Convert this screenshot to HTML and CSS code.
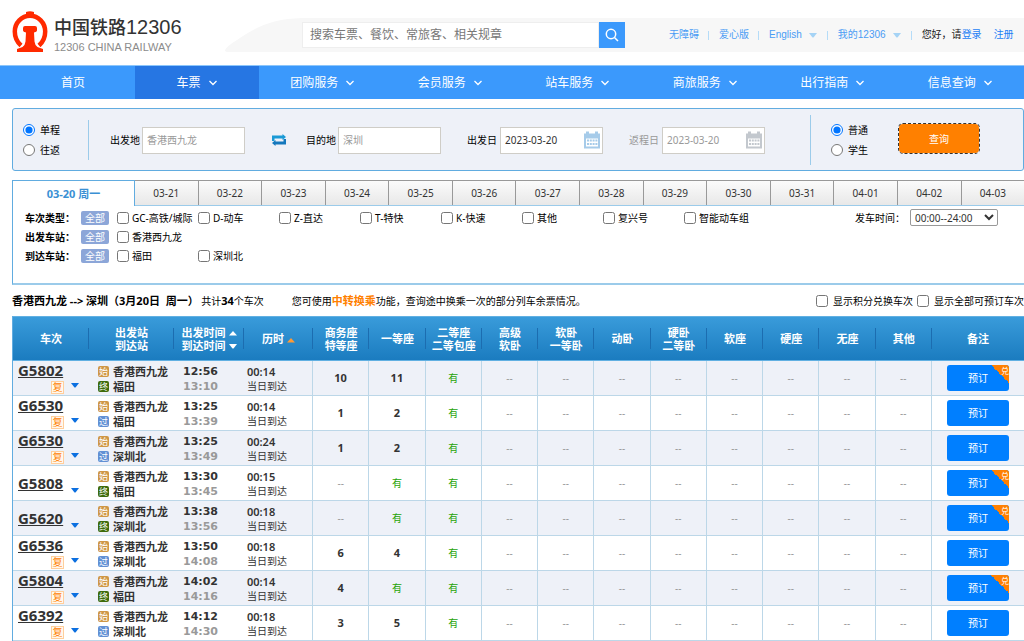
FILE: index.html
```html
<!DOCTYPE html>
<html lang="zh-CN">
<head>
<meta charset="utf-8">
<title>中国铁路12306</title>
<link rel="stylesheet" href="styles.css">
</head>
<body>
<svg class="defs" aria-hidden="true">
  <symbol id="chev" viewBox="0 0 10 6"><path d="M1.500 1l3.500 3.500L8.500 1" fill="none" stroke="currentColor" stroke-width="1.300"/></symbol>
  <symbol id="down" viewBox="0 0 8 5"><path d="M0 0h8L4.500 4.500h-1z" fill="currentColor"/></symbol>
  <symbol id="up" viewBox="0 0 8 5"><path d="M0 4.500h8L4 0z" fill="currentColor"/></symbol>
  <symbol id="cal" viewBox="0 0 18 18">
    <path d="M1 2.500h2V.5h3v2h6v-2h3v2h2v15H1z" fill="currentColor"/>
    <path d="M3 7.500h12v8H3z" fill="#fff"/>
    <path d="M4 8.500h2v2H4zm2.800 0h2v2h-2zm2.800 0h2v2h-2zm2.800 0h2v2h-2zM4 12h2v2H4zm2.800 0h2v2h-2zm2.800 0h2v2h-2zm2.800 0h2v2h-2z" fill="currentColor"/>
  </symbol>
</svg>
<header class="top">
  <a class="brand" href="#">
    <svg class="mark" viewBox="0 0 36 42" aria-hidden="true">
      <path d="M9 34.500C5 31 2.800 27 2.800 20.500a15.200 15.800 0 0 1 30.400 0C33.200 27 31 31 27 34.500" fill="none" stroke="#ff2a00" stroke-width="4.500"/>
      <path d="M14 1q4-1.500 8 0v4h-8zM11 17q0-2 2-2h10q2 0 2 2v2.500q0 1.500-3 2l.5 9q.5 4 3 5.500l5.500 2V41H5v-3l5.500-2q2.500-1.500 3-5.500l.5-9q-3-.5-3-2z" fill="#ff2a00"/>
    </svg>
    <span class="brand-text"><span class="brand-name">中国铁路<span class="brand-num">12306</span></span><span class="brand-sub">12306 CHINA RAILWAY</span></span>
  </a>
  <div class="band">
    <svg class="swoosh" viewBox="0 0 77 34" aria-hidden="true"><path d="M0 32Q2 28 12 22C32 8 48 1 77 0v34H3Q0 34 0 32z" fill="#f7f7f7"/></svg>
    <div class="band-body">
      <form class="search">
        <input type="text" aria-label="搜索" placeholder="搜索车票、餐饮、常旅客、相关规章">
        <button type="button" aria-label="搜索"><svg viewBox="0 0 14 14"><circle cx="6" cy="6" r="4.700" fill="none" stroke="#fff" stroke-width="1.500"/><path d="M9.500 9.500l3.500 3.500" stroke="#fff" stroke-width="1.500"/></svg></button>
      </form>
      <div class="links">
        <a href="#">无障碍</a><i></i><a href="#">爱心版</a><i></i>
        <a href="#">English <svg><use href="#down"/></svg></a><i></i>
        <a href="#">我的12306 <svg><use href="#down"/></svg></a><i></i>
        <span class="hello">您好，请<a href="#">登录</a></span><a class="reg" href="#">注册</a>
      </div>
    </div>
  </div>
</header>
<nav class="nav">
  <a class="home" href="#">首页</a>
  <a class="on" href="#">车票<svg><use href="#chev"/></svg></a>
  <a href="#">团购服务<svg><use href="#chev"/></svg></a>
  <a href="#">会员服务<svg><use href="#chev"/></svg></a>
  <a href="#">站车服务<svg><use href="#chev"/></svg></a>
  <a href="#">商旅服务<svg><use href="#chev"/></svg></a>
  <a href="#">出行指南<svg><use href="#chev"/></svg></a>
  <a href="#">信息查询<svg><use href="#chev"/></svg></a>
</nav>
<main>
  <form class="query">
    <div class="radios trip">
      <label><input type="radio" name="trip" checked>单程</label>
      <label><input type="radio" name="trip">往返</label>
    </div>
    <div class="field from"><label for="from">出发地</label><span class="box"><input id="from" type="text" placeholder="香港西九龙"></span></div>
    <button type="button" class="swap" aria-label="换"><svg viewBox="0 0 14 12"><path d="M0 7V1.500h10.500V0L14 3l-3.500 3V4.500H2.500V7z" fill="#1a9ad6"/><path d="M14 5v5.500H3.500V12L0 9l3.500-3v1.500h8V5z" fill="#1478bd"/></svg></button>
    <div class="field to"><label for="to">目的地</label><span class="box"><input id="to" type="text" placeholder="深圳"></span></div>
    <div class="field go"><label for="go">出发日</label><span class="box"><input id="go" type="text" value="2023-03-20"><svg><use href="#cal"/></svg></span></div>
    <div class="field back"><label for="back">返程日</label><span class="box"><input id="back" type="text" value="2023-03-20"><svg><use href="#cal"/></svg></span></div>
    <div class="radios kind">
      <label><input type="radio" name="kind" checked>普通</label>
      <label><input type="radio" name="kind">学生</label>
    </div>
    <button type="button" class="submit">查询</button>
  </form>

  <div class="days">
    <a class="on" href="#">03-20 周一</a><a href="#">03-21</a><a href="#">03-22</a><a href="#">03-23</a><a href="#">03-24</a><a href="#">03-25</a><a href="#">03-26</a><a href="#">03-27</a><a href="#">03-28</a><a href="#">03-29</a><a href="#">03-30</a><a href="#">03-31</a><a href="#">04-01</a><a href="#">04-02</a><a href="#">04-03</a>
  </div>
  <section class="filters">
    <div class="frow">
      <b>车次类型：</b><button type="button">全部</button>
      <div class="opts">
        <label><input type="checkbox">GC-高铁/城际</label><label><input type="checkbox">D-动车</label><label><input type="checkbox">Z-直达</label><label><input type="checkbox">T-特快</label><label><input type="checkbox">K-快速</label><label><input type="checkbox">其他</label><label><input type="checkbox">复兴号</label><label><input type="checkbox">智能动车组</label>
      </div>
      <div class="depart"><label for="time">发车时间：</label><select id="time"><option>00:00--24:00</option></select></div>
    </div>
    <div class="frow"><b>出发车站：</b><button type="button">全部</button><div class="opts"><label><input type="checkbox">香港西九龙</label></div></div>
    <div class="frow"><b>到达车站：</b><button type="button">全部</button><div class="opts"><label><input type="checkbox">福田</label><label><input type="checkbox">深圳北</label></div></div>
  </section>

  <div class="summary">
    <p><strong>香港西九龙 --&gt; 深圳（3月20日&nbsp; 周一）</strong>&nbsp;共计<strong>34</strong>个车次</p>
    <p class="tip">您可使用<a href="#">中转换乘</a>功能，查询途中换乘一次的部分列车余票情况。</p>
    <div class="toggles"><label><input type="checkbox">显示积分兑换车次</label><label><input type="checkbox">显示全部可预订车次</label></div>
  </div>

  <table class="trains">
    <colgroup><col class="c-no"><col class="c-st"><col class="c-tm"><col class="c-du"><col span="11"><col class="c-op"></colgroup>
    <thead><tr>
      <th>车次</th><th>出发站<br>到达站</th><th class="time-h">出发时间<svg><use href="#up"/></svg><br>到达时间<svg><use href="#down"/></svg></th><th>历时<svg class="hot"><use href="#up"/></svg></th><th>商务座<br>特等座</th><th>一等座</th><th>二等座<br>二等包座</th><th>高级<br>软卧</th><th>软卧<br>一等卧</th><th>动卧</th><th>硬卧<br>二等卧</th><th>软座</th><th>硬座</th><th>无座</th><th>其他</th><th>备注</th>
    </tr></thead>
    <tbody>
      <tr><td class="no"><a href="#">G5802</a><span class="sub"><em>复</em><svg><use href="#down"/></svg></span></td><td class="st"><div><i class="s">始</i>香港西九龙</div><div><i class="e">终</i>福田</div></td><td class="tm"><div>12:56</div><div>13:10</div></td><td class="du"><div>00:14</div><div>当日到达</div></td><td class="n">10</td><td class="n">11</td><td class="y">有</td><td>--</td><td>--</td><td>--</td><td>--</td><td>--</td><td>--</td><td>--</td><td>--</td><td><button type="button" class="book">预订<span>兑</span></button></td></tr>
      <tr><td class="no"><a href="#">G6530</a><span class="sub"><em>复</em><svg><use href="#down"/></svg></span></td><td class="st"><div><i class="s">始</i>香港西九龙</div><div><i class="p">过</i>福田</div></td><td class="tm"><div>13:25</div><div>13:39</div></td><td class="du"><div>00:14</div><div>当日到达</div></td><td class="n">1</td><td class="n">2</td><td class="y">有</td><td>--</td><td>--</td><td>--</td><td>--</td><td>--</td><td>--</td><td>--</td><td>--</td><td><button type="button" class="book">预订</button></td></tr>
      <tr><td class="no"><a href="#">G6530</a><span class="sub"><em>复</em><svg><use href="#down"/></svg></span></td><td class="st"><div><i class="s">始</i>香港西九龙</div><div><i class="p">过</i>深圳北</div></td><td class="tm"><div>13:25</div><div>13:49</div></td><td class="du"><div>00:24</div><div>当日到达</div></td><td class="n">1</td><td class="n">2</td><td class="y">有</td><td>--</td><td>--</td><td>--</td><td>--</td><td>--</td><td>--</td><td>--</td><td>--</td><td><button type="button" class="book">预订</button></td></tr>
      <tr><td class="no plain"><a href="#">G5808</a><span class="sub"><svg><use href="#down"/></svg></span></td><td class="st"><div><i class="s">始</i>香港西九龙</div><div><i class="e">终</i>福田</div></td><td class="tm"><div>13:30</div><div>13:45</div></td><td class="du"><div>00:15</div><div>当日到达</div></td><td>--</td><td class="y">有</td><td class="y">有</td><td>--</td><td>--</td><td>--</td><td>--</td><td>--</td><td>--</td><td>--</td><td>--</td><td><button type="button" class="book">预订<span>兑</span></button></td></tr>
      <tr><td class="no plain"><a href="#">G5620</a><span class="sub"><svg><use href="#down"/></svg></span></td><td class="st"><div><i class="s">始</i>香港西九龙</div><div><i class="e">终</i>深圳北</div></td><td class="tm"><div>13:38</div><div>13:56</div></td><td class="du"><div>00:18</div><div>当日到达</div></td><td>--</td><td class="y">有</td><td class="y">有</td><td>--</td><td>--</td><td>--</td><td>--</td><td>--</td><td>--</td><td>--</td><td>--</td><td><button type="button" class="book">预订<span>兑</span></button></td></tr>
      <tr><td class="no"><a href="#">G6536</a><span class="sub"><em>复</em><svg><use href="#down"/></svg></span></td><td class="st"><div><i class="s">始</i>香港西九龙</div><div><i class="p">过</i>深圳北</div></td><td class="tm"><div>13:50</div><div>14:08</div></td><td class="du"><div>00:18</div><div>当日到达</div></td><td class="n">6</td><td class="n">4</td><td class="y">有</td><td>--</td><td>--</td><td>--</td><td>--</td><td>--</td><td>--</td><td>--</td><td>--</td><td><button type="button" class="book">预订</button></td></tr>
      <tr><td class="no"><a href="#">G5804</a><span class="sub"><em>复</em><svg><use href="#down"/></svg></span></td><td class="st"><div><i class="s">始</i>香港西九龙</div><div><i class="e">终</i>福田</div></td><td class="tm"><div>14:02</div><div>14:16</div></td><td class="du"><div>00:14</div><div>当日到达</div></td><td class="n">4</td><td class="y">有</td><td class="y">有</td><td>--</td><td>--</td><td>--</td><td>--</td><td>--</td><td>--</td><td>--</td><td>--</td><td><button type="button" class="book">预订<span>兑</span></button></td></tr>
      <tr><td class="no"><a href="#">G6392</a><span class="sub"><em>复</em><svg><use href="#down"/></svg></span></td><td class="st"><div><i class="s">始</i>香港西九龙</div><div><i class="p">过</i>深圳北</div></td><td class="tm"><div>14:12</div><div>14:30</div></td><td class="du"><div>00:18</div><div>当日到达</div></td><td class="n">3</td><td class="n">5</td><td class="y">有</td><td>--</td><td>--</td><td>--</td><td>--</td><td>--</td><td>--</td><td>--</td><td>--</td><td><button type="button" class="book">预订</button></td></tr>
    </tbody>
  </table>
</main>
</body>
</html>
```
FILE: styles.css
```css
* { box-sizing: border-box; }
body {
  margin: 0;
  background: #fff;
  color: #000;
  font: 10px/16px "Noto Sans", "Noto Sans CJK SC", sans-serif;
}
a { color: inherit; text-decoration: none; }
button, input, select { font: inherit; margin: 0; }
button { border: 0; padding: 0; }
p { margin: 0; }
svg { display: block; flex: none; }
.defs { position: absolute; width: 0; height: 0; }
input[type="radio"], input[type="checkbox"] { width: 12px; height: 12px; flex: none; }
label { white-space: nowrap; }

/* header */
.top { display: flex; height: 65px; padding: 11px 0 0 12px; }
.brand { display: flex; width: 213px; flex: none; }
.mark { width: 36px; height: 42px; }
.brand-text { padding: 3px 0 0 6px; white-space: nowrap; font-family: "Liberation Sans", "Noto Sans CJK SC", sans-serif; }
.brand-name { display: block; font-size: 18px; line-height: 26px; font-weight: 500; color: #333; }
.brand-num { font-size: 20px; font-weight: 400; }
.brand-sub { display: block; font-size: 11px; line-height: 12px; color: #8c8c8c; }
.band { flex: 1; display: flex; height: 34px; margin-top: 7px; }
.swoosh { width: 77px; height: 34px; }
.band-body { flex: 1; display: flex; align-items: center; background: #f7f7f7; }
.search { display: flex; width: 323px; height: 26px; flex: none; }
.search input { flex: 1; min-width: 0; border: 1px solid #eee; background: #fff; padding: 0 7px; font-size: 12px; }
.search input::placeholder { color: #777; }
.search button { width: 26px; background: #3b99fc; display: grid; place-items: center; }
.search button svg { width: 14px; height: 14px; }
.links { display: flex; align-items: center; margin-left: 44px; color: #4a9cf5; white-space: nowrap; font-family: "Liberation Sans", "Noto Sans CJK SC", sans-serif; }
.links > a { display: flex; align-items: center; }
.links svg { width: 8px; height: 5px; margin-left: 7px; color: #a5d3f5; }
.links > i { width: 1px; height: 9px; margin: 0 10px 0 9px; background: #b5dcf8; }
.links svg + i, .links a:has(svg) + i { margin-left: 10px; }
.links .hello { color: #222; }
.links .hello a, .links .reg { color: #1c7ff5; }
.links .reg { margin-left: 12px; }

/* main navigation */
.nav { display: flex; height: 34px; background: #3b99fc; border-top: 1px solid #8cc6fb; color: #fff; font-size: 12px; }
.nav a { flex: 1; display: flex; align-items: center; justify-content: center; gap: 7px; }
.nav .home { flex: 0 0 135px; padding-left: 11px; }
.nav .on { flex: 0 0 124px; background: #2676e3; }
.nav svg { width: 10px; height: 6px; }

main { padding: 9px 0 0 12px; }

/* query form */
.query { display: flex; align-items: center; height: 63px; background: #eef1f8; border: 1px solid #61ace0; border-radius: 3px; padding: 1px 0 0 10px; }
.radios { display: flex; flex-direction: column; flex: none; }
.radios label { display: flex; align-items: center; gap: 5px; height: 20px; }
.trip { width: 66px; border-right: 1px solid #9bcbea; }
.field { display: flex; align-items: center; gap: 2px; white-space: nowrap; }
.box { display: flex; align-items: center; width: 103px; height: 27px; background: #fff; border: 1px solid #cfcdc7; padding-right: 1px; }
.box input { flex: 1; min-width: 0; width: 100%; border: 0; background: none; padding: 0 4px; color: #333; }
.box input::placeholder { color: #999; }
.box svg { width: 18px; height: 18px; color: #a6cbe9; }
.from { margin-left: 21px; }
.swap { margin: 0 20px 0 27px; background: none; }
.swap svg { width: 14px; height: 12px; }
.go { margin-left: 26px; }
.back { margin-left: 26px; }
.go, .back { gap: 3px; }
.back, .back .box input { color: #999; }
.back .box svg { color: #c3c8ce; }
.kind { margin-left: 45px; padding: 5px 0 5px 20px; border-left: 1px solid #9bcbea; }
.submit { width: 80px; height: 29px; margin: 0 0 3px 31px; background: #ff8000; color: #fff; border-radius: 4px; outline: 1px dashed #333; }

/* date tabs */
.days { display: flex; height: 26px; margin: 9px 0 0; border-bottom: 1px solid #9bcbea; color: #333; }
.days a { flex: 1; display: grid; place-items: center; background: linear-gradient(#fbfbfb, #e8e8e8); border-top: 1px solid #999; border-right: 1px solid #999; }
.days a:last-child { border-right: 0; }
.days .on { flex: 0 0 123px; height: 26px; background: #fff; color: #3a90d4; font-weight: 700; font-size: 11px; border: 1px solid #61ace0; border-bottom: 0; }

/* filters */
.filters { height: 79px; padding: 2px 0 0 12px; border-left: 1px solid #61ace0; border-bottom: 2px solid #9bcbea; }
.frow { display: flex; align-items: center; height: 19px; }
.frow b { width: 56px; flex: none; }
.frow > button { width: 28px; height: 14px; line-height: 14px; background: #8ca6d8; color: #fff; border-radius: 2px; }
.opts { display: grid; grid-template-columns: repeat(8, 81px); margin-left: 8px; }
.opts label { display: flex; align-items: center; gap: 3px; }
.depart { display: flex; align-items: center; gap: 5px; margin-left: 90px; }
.depart select { width: 88px; height: 17px; background: #fff; color: #333; border: 1px solid #999; border-radius: 2px; }

.summary { display: flex; align-items: center; height: 31px; white-space: nowrap; }
.summary strong, .summary .tip a { font-size: 11px; }
.tip { margin-left: 28px; }
.tip a { color: #ff8000; font-weight: 700; }
.toggles { display: flex; gap: 4px; margin-left: auto; }
.toggles label { display: flex; align-items: center; gap: 5px; }

/* trains */
.trains { width: 100%; table-layout: fixed; border-collapse: separate; border-spacing: 0; border-left: 1px solid #61ace0; text-align: center; }
.c-no { width: 76px; }
.c-st { width: 85px; }
.c-tm { width: 70px; }
.c-du { width: 69px; }
.c-op { width: 92px; }
.trains thead tr { background: linear-gradient(#3a9cdb, #1a7bbf); }
.trains th { height: 45px; padding: 0; border-top: 1px solid #61b0e2; border-bottom: 1px solid #61b0e2; color: #fff; font-size: 11px; line-height: 13px; white-space: nowrap; background: linear-gradient(#1c6db0, #1c6db0) no-repeat right center / 1px 21px; }
.trains th:last-child { background: none; }
.trains th svg { display: inline-block; width: 8px; height: 5px; margin-left: 3px; vertical-align: middle; }
.trains .hot { color: #ff9a35; }
.trains td { height: 35px; padding: 0; color: #999; border-bottom: 1px solid #bcd7e8; border-right: 1px solid #bcd7e8; }
.trains td:nth-child(-n+3), .trains td:last-child { border-right: 0; }
.trains tbody tr:nth-child(odd) { background: #eef1f8; }
.trains .no, .trains .st, .trains .tm, .trains .du { text-align: left; vertical-align: top; }
.no { position: relative; }
.trains .no { padding: 1px 0 0 5px; }
.trains .plain { padding-top: 9px; }
.no > a { display: block; font-size: 15px; line-height: 16px; font-weight: 700; color: #333; text-decoration: underline; }
.sub { position: absolute; left: 38px; bottom: 1px; display: flex; align-items: flex-start; justify-content: flex-end; width: 28px; height: 13px; }
.sub em { width: 13px; height: 13px; margin-right: auto; border: 1px solid #ffcf9c; background: #fff8ee; color: #ff8000; font-style: normal; line-height: 11px; text-align: center; }
.sub svg { width: 8px; height: 5px; margin-top: 2px; color: #0b6fe0; }
.trains .st { padding: 3px 0 0 9px; color: #333; font-weight: 700; font-size: 11px; }
.st div { display: flex; align-items: center; gap: 4px; line-height: 15px; white-space: nowrap; }
.st i { width: 11px; height: 11px; border-radius: 2px; color: #fff; font: 400 9px/11px "Noto Sans CJK SC", sans-serif; text-align: center; }
.s { background: #cf9746; }
.e { background: #3e6b0c; }
.p { background: #6290d4; }
.trains .tm { padding: 3px 0 0 9px; font: 700 11px/15px "DejaVu Sans", sans-serif; }
.tm div:first-child { color: #333; }
.trains .du { padding: 3px 0 0 3px; color: #333; line-height: 15px; }
.du div:first-child { font-size: 11px; font-weight: 600; }
.trains .n { color: #333; font-weight: 700; font-size: 11px; }
.trains .y { color: #26a306; }
.book { position: relative; overflow: hidden; display: block; width: 62px; height: 26px; margin: 0 auto; background: #007fff; color: #fff; border-radius: 3px; }
.book span { position: absolute; top: 0; right: 0; width: 18px; height: 18px; background: linear-gradient(45deg, transparent 50%, #ff8000 50%); font-size: 8px; line-height: 11px; text-align: right; }
```
